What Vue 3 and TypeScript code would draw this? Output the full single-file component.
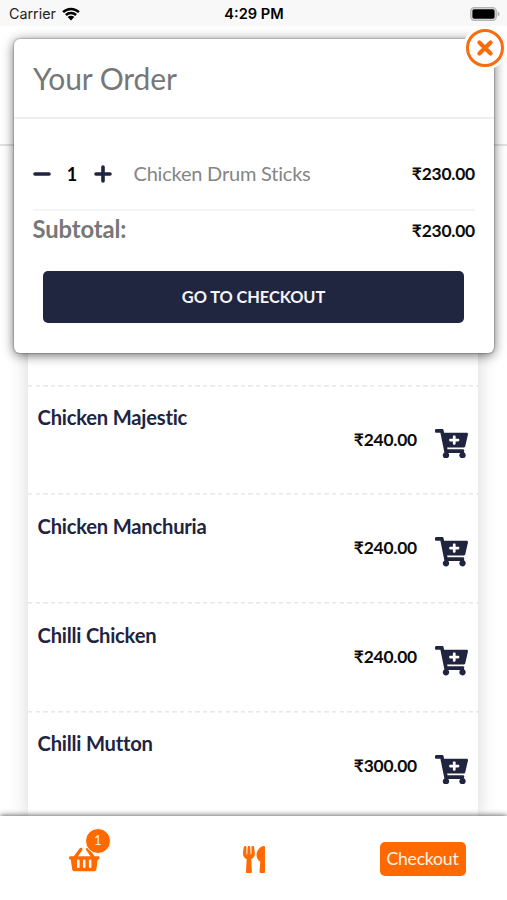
<script setup lang="ts">
import { ref, computed } from 'vue'

interface Dish {
  name: string
  price: number
}

const dishes: Dish[] = [
  { name: 'Chicken Majestic', price: 240 },
  { name: 'Chicken Manchuria', price: 240 },
  { name: 'Chilli Chicken', price: 240 },
  { name: 'Chilli Mutton', price: 300 },
]

const item: Dish = { name: 'Chicken Drum Sticks', price: 230 }
const quantity = ref(1)
const open = ref(true)
const subtotal = computed(() => quantity.value * item.price)

const money = (n: number): string => `₹${n.toFixed(2)}`
</script>

<template>
  <div class="screen">
    <header class="status">
      <div class="carrier">
        <span>Carrier</span>
        <svg class="wifi" viewBox="0 0 18 14">
          <path d="M1.1 5.1A11.4 11.4 0 0 1 16.9 5.1M3.9 8A7.3 7.3 0 0 1 14.1 8" fill="none" stroke="#000" stroke-width="2.5" />
          <path d="M5.7 10.1A4.7 4.7 0 0 1 12.3 10.1L9 13.4Z" fill="#000" />
        </svg>
      </div>
      <span class="time">4:29 PM</span>
      <svg class="battery" viewBox="0 0 30 14">
        <rect x=".7" y=".7" width="25.6" height="12.6" rx="3.6" fill="#ddd" stroke="#b4b4b4" stroke-width="1.2" />
        <rect x="2.4" y="2.3" width="22.2" height="9.4" rx="1.8" />
        <path d="M27.6 4.6Q29.6 5.4 29.6 7T27.6 9.4Z" fill="#b4b4b4" />
      </svg>
    </header>
    <div class="page-head"></div>

    <main class="menu">
      <div class="spacer"></div>
      <div v-for="dish in dishes" :key="dish.name" class="dish">
        <h3>{{ dish.name }}</h3>
        <div class="buy">
          <span class="price">{{ money(dish.price) }}</span>
          <svg class="cart" viewBox="0 0 576 512">
            <path d="M504.717 320H211.572l6.545 32h268.418c15.401 0 26.816 14.301 23.403 29.319l-5.517 24.276C523.112 414.668 536 433.828 536 456c0 31.202-25.519 56.444-56.824 55.994-29.823-.429-54.35-24.631-55.155-54.447-.44-16.287 6.085-31.049 16.803-41.548H231.176C241.553 426.165 248 440.326 248 456c0 31.813-26.528 57.431-58.67 55.938-28.54-1.325-51.751-24.385-53.251-52.917-1.158-22.034 10.436-41.455 28.051-51.586L93.883 64H24C10.745 64 0 53.255 0 40V24C0 10.745 10.745 0 24 0h102.529c11.401 0 21.228 8.021 23.513 19.19L159.208 64H551.99c15.401 0 26.816 14.301 23.403 29.319l-47.273 208C525.637 312.246 515.923 320 504.717 320zM408 168h-48v-40c0-8.837-7.163-16-16-16h-16c-8.837 0-16 7.163-16 16v40h-48c-8.837 0-16 7.163-16 16v16c0 8.837 7.163 16 16 16h48v40c0 8.837 7.163 16 16 16h16c8.837 0 16-7.163 16-16v-40h48c8.837 0 16-7.163 16-16v-16c0-8.837-7.163-16-16-16z" />
          </svg>
        </div>
      </div>
    </main>

    <nav class="tabs">
      <div class="tab">
        <span class="basket-wrap">
          <svg class="basket" viewBox="0 0 576 512">
            <path d="M576 216v16c0 13.255-10.745 24-24 24h-8l-26.113 182.788C514.509 462.435 494.257 480 470.37 480H105.63c-23.887 0-44.139-17.565-47.518-41.212L32 256h-8c-13.255 0-24-10.745-24-24v-16c0-13.255 10.745-24 24-24h67.341l106.78-146.821c10.395-14.292 30.407-17.453 44.701-7.058 14.293 10.395 17.453 30.408 7.058 44.701L170.477 192h235.046L326.12 82.821c-10.395-14.292-7.234-34.306 7.059-44.701 14.291-10.395 34.306-7.235 44.701 7.058L484.659 192H552c13.255 0 24 10.745 24 24zM312 392V280c0-13.255-10.745-24-24-24s-24 10.745-24 24v112c0 13.255 10.745 24 24 24s24-10.745 24-24zm112 0V280c0-13.255-10.745-24-24-24s-24 10.745-24 24v112c0 13.255 10.745 24 24 24s24-10.745 24-24zm-224 0V280c0-13.255-10.745-24-24-24s-24 10.745-24 24v112c0 13.255 10.745 24 24 24s24-10.745 24-24z" />
          </svg>
          <span class="badge">{{ quantity }}</span>
        </span>
      </div>
      <div class="tab">
        <svg class="utensils" viewBox="0 0 416 512">
          <path d="M207.9 15.2c.8 4.7 16.1 94.5 16.1 128.8 0 52.3-27.8 89.6-68.9 104.6L168 486.7c.7 13.7-10.2 25.3-24 25.3H80c-13.7 0-24.7-11.5-24-25.3l12.9-238.1C27.7 233.6 0 196.2 0 144 0 109.6 15.3 19.9 16.1 15.2 19.3-5.1 61.4-5.4 64 16.3v141.2c1.3 3.4 15.1 3.2 16 0 1.4-25.3 7.9-139.2 8-141.8 3.3-20.8 44.7-20.8 47.9 0 .2 2.7 6.6 116.5 8 141.8.9 3.2 14.8 3.4 16 0V16.3c2.6-21.6 44.8-21.4 47.9-1.1zm119.2 285.7l-15 185.1c-1.2 14 9.9 26 23.9 26h56c13.3 0 24-10.7 24-24V24c0-13.2-10.7-24-24-24-82.5 0-221.4 178.5-64.9 300.9z" />
        </svg>
      </div>
      <div class="tab">
        <button class="checkout">Checkout</button>
      </div>
    </nav>

    <section v-if="open" class="order">
      <h2>Your Order</h2>
      <div class="body">
        <div class="line">
          <button class="step" @click="quantity = Math.max(1, quantity - 1)">
            <svg viewBox="0 0 18 18"><path d="M2 9H16" /></svg>
          </button>
          <span class="qty">{{ quantity }}</span>
          <button class="step" @click="quantity++">
            <svg viewBox="0 0 18 18"><path d="M2 9H16M9 2V16" /></svg>
          </button>
          <span class="name">{{ item.name }}</span>
          <span class="price">{{ money(subtotal) }}</span>
        </div>
        <div class="subtotal">
          <strong>Subtotal:</strong>
          <span class="price">{{ money(subtotal) }}</span>
        </div>
        <button class="go">GO TO CHECKOUT</button>
      </div>
      <button class="close" @click="open = false">
        <svg viewBox="0 0 18 18"><path d="M3.4 3.4L14.6 14.6M14.6 3.4L3.4 14.6" /></svg>
      </button>
    </section>
  </div>
</template>

<style>
body {
  margin: 0;
  background: #fff;
}
</style>

<style scoped>
* {
  box-sizing: border-box;
}
.screen {
  position: relative;
  display: flex;
  flex-direction: column;
  width: 507px;
  height: 900px;
  overflow: hidden;
  background: #fff;
  font-family: Lato, 'Open Sans', sans-serif;
  font-variant-ligatures: none;
}
svg {
  display: block;
  flex: none;
}
button {
  padding: 0;
  border: 0;
  background: none;
  font-family: inherit;
}
h2,
h3 {
  margin: 0;
}
.status {
  display: grid;
  grid-template-columns: 1fr auto 1fr;
  align-items: center;
  flex: none;
  height: 26px;
  padding: 1px 8px 0 9px;
  background: #f8f8f8;
  font: 14.6px/26px Inter, sans-serif;
  color: #000;
}
.carrier {
  display: flex;
  align-items: center;
  gap: 6px;
  color: #222;
  font-size: 14.3px;
}
.wifi {
  width: 18px;
  height: 14px;
  margin-top: -1px;
}
.time {
  font-weight: 600;
}
.battery {
  justify-self: end;
  width: 30px;
  height: 14px;
  margin: -1px -1px 0 0;
}
.page-head {
  flex: none;
  height: 120px;
  border-bottom: 2px solid #e2e2e2;
}
.menu {
  flex: 1;
  min-height: 0;
  margin: 0 29px 0 28px;
  background: #fff;
  box-shadow: 0 0 18px rgba(0, 0, 0, 0.17);
}
.spacer {
  height: 238.5px;
}
.dish {
  display: flex;
  justify-content: space-between;
  height: 108.8px;
  padding: 0 10px 0 9.5px;
  background: repeating-linear-gradient(90deg, #e8e8e8 0 4.4px, transparent 4.4px 7.6px) 0 0 / 100% 1.6px no-repeat;
}
.dish h3 {
  padding-top: 19.5px;
  font-size: 20.2px;
  line-height: 26px;
  font-weight: 700;
  letter-spacing: -0.22px;
  color: #20243f;
}
.buy {
  display: flex;
  align-items: flex-start;
  gap: 18px;
  padding-top: 43px;
}
.price {
  font-size: 17.4px;
  line-height: 24px;
  font-weight: 700;
  letter-spacing: -0.2px;
  color: #0c0c0c;
}
.cart {
  width: 33px;
  height: 29.5px;
  margin-top: 1px;
  fill: #20243f;
}
.tabs {
  position: relative;
  display: grid;
  grid-template-columns: repeat(3, 1fr);
  flex: none;
  height: 84px;
  background: #fff;
  box-shadow: 0 0 6px rgba(0, 0, 0, 0.75);
}
.tab {
  display: flex;
  align-items: center;
  justify-content: center;
  padding-top: 2px;
}
.basket-wrap {
  position: relative;
}
.basket,
.utensils {
  fill: #ff6a00;
}
.basket {
  width: 30.5px;
  height: 27px;
}
.utensils {
  width: 22px;
  height: 27px;
}
.badge {
  position: absolute;
  top: -17.5px;
  left: 15.5px;
  width: 26px;
  height: 26px;
  border: 1px solid #fff;
  border-radius: 50%;
  background: #ff6a00;
  color: #ffe9d8;
  font-size: 13px;
  line-height: 23px;
  text-align: center;
}
.checkout {
  width: 86px;
  height: 34px;
  border-radius: 5px;
  background: #ff6a00;
  color: #fff3e8;
  font-size: 17.6px;
  letter-spacing: -0.2px;
  line-height: 34px;
}
.order {
  position: absolute;
  top: 39px;
  left: 14px;
  width: 480px;
  height: 314px;
  border-radius: 6px;
  background: #fff;
  box-shadow: 0 0 1px 0.5px rgba(0, 0, 0, 0.15), 0 2px 12px rgba(0, 0, 0, 0.6);
}
.order h2 {
  height: 80px;
  padding-left: 19px;
  border-bottom: 2px solid #eee;
  font-size: 30px;
  letter-spacing: -0.1px;
  line-height: 79px;
  font-weight: 400;
  color: #777;
}
.body {
  padding: 0 19px 0 18.5px;
}
.line {
  display: flex;
  align-items: center;
  height: 92px;
  padding-top: 19px;
  border-bottom: 2px solid #f5f5f5;
}
.step svg {
  width: 18px;
  height: 18px;
  fill: none;
  stroke: #20243f;
  stroke-width: 3.6;
  stroke-linecap: round;
}
.qty {
  width: 43px;
  font-size: 18px;
  font-weight: 700;
  text-align: center;
}
.name {
  flex: 1;
  margin: -2px 0 0 22px;
  font-size: 20px;
  letter-spacing: -0.21px;
  line-height: 24px;
  color: #858585;
}
.subtotal {
  display: flex;
  justify-content: space-between;
  align-items: center;
  height: 40px;
}
.subtotal strong {
  margin-top: -5px;
  font-size: 23.8px;
  letter-spacing: -0.1px;
  line-height: 36px;
  color: #777;
}
.go {
  display: block;
  width: 421px;
  height: 52px;
  margin: 20px 0 0 10.5px;
  padding-bottom: 1px;
  border-radius: 5px;
  background: #20263f;
  color: #f4f4fa;
  font-size: 16.4px;
  letter-spacing: -0.1px;
  font-weight: 700;
}
.close {
  position: absolute;
  top: -10px;
  right: -9.5px;
  display: grid;
  place-items: center;
  width: 38px;
  height: 38px;
  border: 3.5px solid #f86c0c;
  border-radius: 50%;
  background: #fff;
  box-shadow: 0 0 0 3px #fff;
}
.close svg {
  width: 18px;
  height: 18px;
  fill: none;
  stroke: #f86c0c;
  stroke-width: 4.2;
  stroke-linecap: round;
}
</style>
